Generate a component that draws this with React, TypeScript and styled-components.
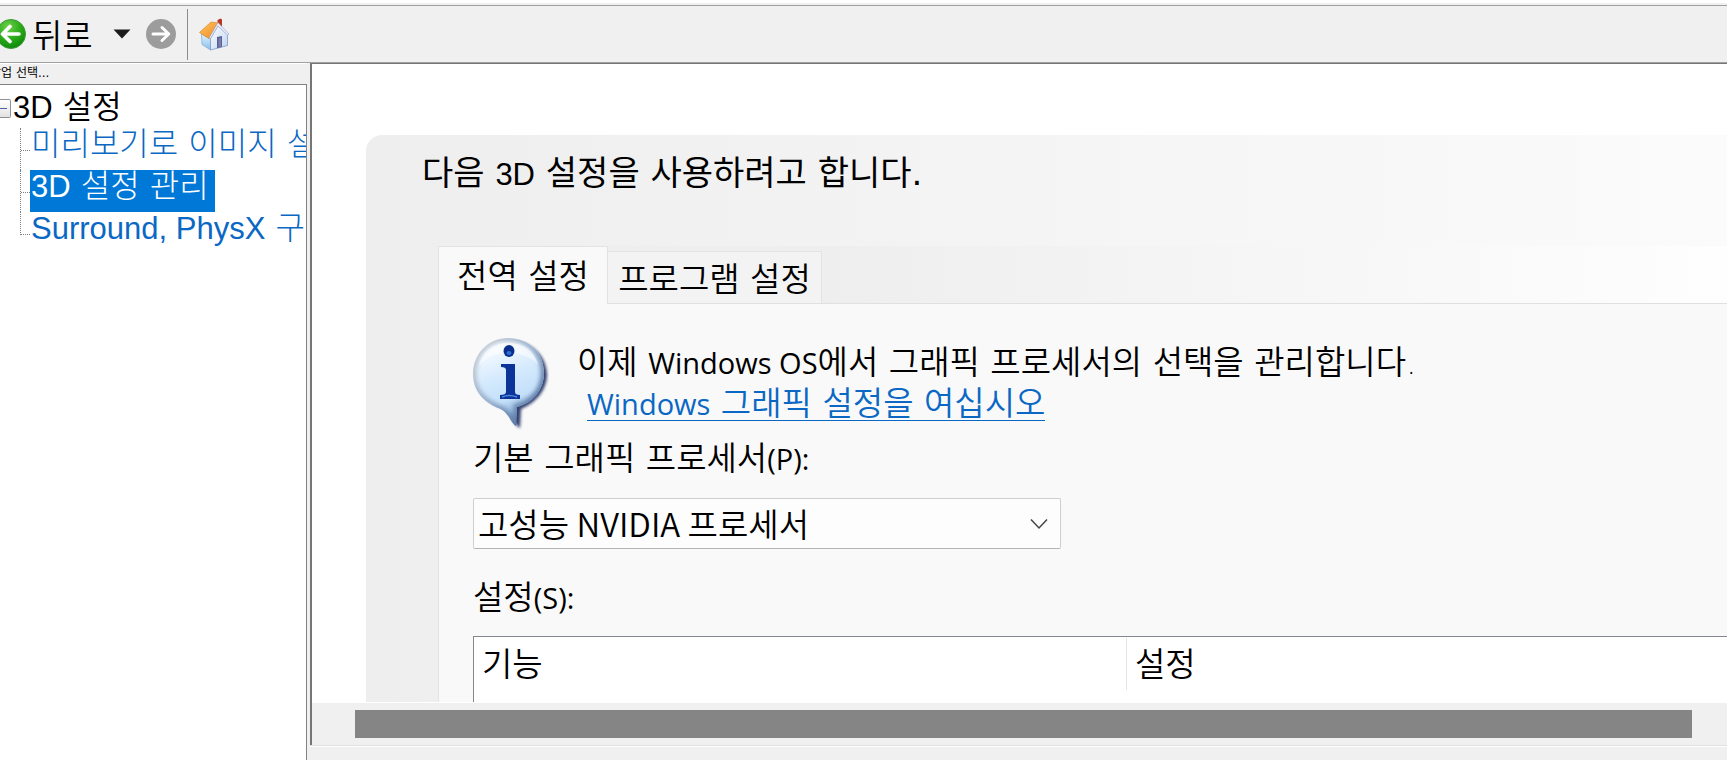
import React from "react";
import styled, { createGlobalStyle } from "styled-components";

const Global = createGlobalStyle`
  *, *::before, *::after { box-sizing: border-box; }
  body {
    margin: 0;
    background: #f0f0f0;
    color: #000;
    font-family: "DejaVu Sans", "Noto Sans CJK KR", sans-serif;
    font-size: 33px;
    font-weight: 350;
    line-height: 41px;
  }
  button, select { font: inherit; color: inherit; }
`;

const Page = styled.div`
  height: 100vh;
  display: flex;
  flex-direction: column;
  overflow: hidden;
`;

const Toolbar = styled.header`
  flex: none;
  display: flex;
  align-items: center;
  height: 63px;
  padding-top: 3px;
  border-top: 3px solid #fff;
  border-bottom: 1px solid #a0a0a0;
  background: linear-gradient(#a0a0a0, #a0a0a0) 0 2px / 100% 1px no-repeat #f0f0f0;
`;

const ToolButton = styled.button<{ $gap?: number }>`
  display: flex;
  align-items: center;
  margin: 0 0 0 ${(p) => p.$gap ?? 0}px;
  padding: 0;
  border: 0;
  background: none;
  white-space: nowrap;
  svg { display: block; }
`;

const BackLabel = styled.span`
  margin-left: 5px;
  padding-top: 4px;
`;

const ToolSeparator = styled.span`
  width: 1px;
  height: 51px;
  margin: 0 11px;
  background: #8c8c8c;
`;

const Workspace = styled.div`
  flex: 1;
  min-height: 0;
  display: flex;
`;

const Sidebar = styled.aside`
  flex: none;
  width: 307px;
  display: flex;
  flex-direction: column;
  border-top: 1px solid #fff;
`;

const SidebarTitle = styled.h2`
  margin: 0 0 0 -10px;
  height: 20px;
  font-size: 12px;
  font-weight: 400;
  line-height: 18px;
  white-space: nowrap;
`;

const Tree = styled.nav`
  flex: 1;
  overflow: hidden;
  padding-top: 1px;
  border: 1px solid #828282;
  border-width: 1px 1px 0 0;
  background: #fff;
  font-size: 32px;
`;

const TreeRoot = styled.div`
  display: flex;
  align-items: center;
  height: 42px;
  white-space: nowrap;
`;

const Toggle = styled.button`
  width: 11px;
  height: 19px;
  margin: 3px 2px 0 0;
  padding: 0;
  border: 1px solid #919191;
  border-left: 0;
  border-radius: 0 2px 2px 0;
  background: linear-gradient(#4b63a7, #4b63a7) 0 8px / 7px 1px no-repeat,
    linear-gradient(#fff, #e2e2e2);
`;

const TreeList = styled.ul`
  margin: 0;
  padding: 0 0 0 20px;
  list-style: none;
`;

const TreeItem = styled.li`
  display: flex;
  height: 42px;
  border-left: 1px dotted #808080;
  &::before {
    content: "";
    flex: none;
    width: 9px;
    height: 23px;
    border-bottom: 1px dotted #808080;
  }
  &:last-child { border-left: 0; }
  &:last-child::before { width: 10px; border-left: 1px dotted #808080; }
`;

const TreeLink = styled.a<{ $selected?: boolean }>`
  padding: 0 6px 10px 1px;
  line-height: 32px;
  white-space: nowrap;
  text-decoration: none;
  font-weight: 300;
  color: ${(p) => (p.$selected ? "#fff" : "#0a68c4")};
  background: ${(p) => (p.$selected ? "#0078d7" : "none")};
`;

const Narrow = styled.span`
  font-family: "Liberation Sans", sans-serif;
  font-size: 31px;
  line-height: 1;
`;

const Latin = styled.span`
  font-family: "Open Sans", sans-serif;
  font-size: 29px;
  font-weight: 400;
  line-height: 1;
`;

const Content = styled.main`
  flex: 1;
  min-width: 0;
  display: flex;
  flex-direction: column;
  padding-left: 3px;
`;

const Pane = styled.div`
  flex: 1;
  min-height: 0;
  display: flex;
  flex-direction: column;
  border: 2px solid #767676;
  border-width: 1px 0 0 2px;
  background: #fff;
`;

const Viewport = styled.div`
  flex: 1;
  min-height: 0;
  display: flex;
  overflow: hidden;
  padding: 71px 0 0 54px;
  border-bottom: 1px solid #fff;
`;

const Card = styled.section`
  flex: 1;
  min-width: 0;
  display: flex;
  flex-direction: column;
  padding: 18px 0 0 72px;
  border-top-left-radius: 16px;
  background: linear-gradient(90deg, #eeeeee, #fbfbfb);
`;

const CardTitle = styled.h1`
  height: 41px;
  margin: 0 0 52px -16px;
  font-size: 34px;
  font-weight: 400;
  line-height: 41px;
  white-space: nowrap;
`;

const TabStrip = styled.div`
  display: flex;
  align-items: flex-end;
  background: linear-gradient(90deg, #eeeeee 30%, #fefefe);
`;

const Tab = styled.button<{ $active?: boolean }>`
  width: ${(p) => (p.$active ? 170 : 214)}px;
  height: ${(p) => (p.$active ? 58 : 53)}px;
  padding: ${(p) => (p.$active ? 2 : 4)}px 0 0;
  border: 1px solid #e3e3e3;
  border-bottom: ${(p) => (p.$active ? "0" : "1px solid #e0e0e0")};
  border-left-width: ${(p) => (p.$active ? 1 : 0)}px;
  background: ${(p) => (p.$active ? "#f9f9f9" : "#f3f3f3")};
  white-space: nowrap;
`;

const TabRule = styled.div`
  flex: 1;
  align-self: flex-end;
  border-bottom: 1px solid #e0e0e0;
`;

const TabPanel = styled.div`
  flex: 1;
  display: flex;
  flex-direction: column;
  padding: 34px 0 0 34px;
  border-left: 1px solid #e3e3e3;
  background: #f9f9f9;
`;

const Notice = styled.div`
  display: flex;
  gap: 28px;
  height: 100px;
  svg { flex: none; display: block; }
`;

const NoticeText = styled.p`
  margin: 4px 0 0;
  white-space: nowrap;
`;

const NoticeLink = styled.a`
  display: block;
  width: fit-content;
  margin-left: 10px;
  height: 38px;
  border-bottom: 1px solid #0a68c4;
  color: #0a68c4;
  text-decoration: none;
`;

const FieldLabel = styled.label`
  display: block;
  height: 41px;
  margin-bottom: 19px;
`;

const SelectBox = styled.div`
  position: relative;
  width: 588px;
  height: 51px;
  margin-bottom: 28px;
  svg {
    position: absolute;
    right: 12px;
    top: 20px;
    pointer-events: none;
  }
`;

const Select = styled.select`
  appearance: none;
  width: 100%;
  height: 100%;
  padding: 0 40px 0 4px;
  border: 1px solid #cfcfcf;
  border-bottom-color: #b4b4b4;
  border-radius: 2px;
  background: #fdfdfd;
  font-family: "Noto Sans CJK KR", sans-serif;
`;

const SettingsLabel = styled.h2`
  height: 41px;
  margin: 0 0 18px;
  font-size: 33px;
  font-weight: 350;
  line-height: 41px;
`;

const GridFrame = styled.div`
  flex: 1;
  padding-top: 1px;
  border: 1px solid #828790;
  border-width: 1px 0 0 1px;
  background: #fff;
`;

const Grid = styled.table`
  width: 100%;
  table-layout: fixed;
  border-collapse: separate;
  border-spacing: 0;
`;

const HeadCell = styled.th<{ $width?: number }>`
  width: ${(p) => (p.$width ? `${p.$width}px` : "auto")};
  height: 52px;
  padding: 0 8px;
  border-right: 1px solid #e5e5e5;
  font-weight: 350;
  text-align: left;
  &:last-child { border-right: 0; }
`;

const ScrollTrack = styled.div`
  flex: none;
  display: flex;
  height: 42px;
  padding: 7px 35px 7px 43px;
  background: #f0f0f0;
`;

const ScrollThumb = styled.div`
  flex: 1;
  background: #858585;
`;

const StatusStrip = styled.footer`
  flex: none;
  height: 15px;
  border-top: 1px solid #e0e0e0;
  box-shadow: inset 0 1px #fff;
`;

const BackIcon = () => (
  <svg width="27" height="32" viewBox="0 0 27 32" aria-hidden="true">
    <defs>
      <radialGradient id="green" cx="0.4" cy="0.25" r="0.8">
        <stop offset="0" stopColor="#6fd04a" />
        <stop offset="0.5" stopColor="#2fae1c" />
        <stop offset="1" stopColor="#0a8606" />
      </radialGradient>
    </defs>
    <circle cx="11" cy="16" r="14.5" fill="url(#green)" stroke="#3f9a38" />
    <path d="M19 16H3M10 8.500L2.500 16l7.500 7.500" fill="none" stroke="#fff" strokeWidth="3.600" strokeLinecap="round" strokeLinejoin="round" />
  </svg>
);

const CaretIcon = () => (
  <svg width="18" height="10" viewBox="0 0 18 10" aria-hidden="true">
    <path d="M0.500 0.500h17L9 9.500z" fill="#1c1c1e" />
  </svg>
);

const ForwardIcon = () => (
  <svg width="30" height="30" viewBox="0 0 30 30" aria-hidden="true">
    <circle cx="15" cy="15" r="15" fill="#9c9c9c" />
    <path d="M7 15h15.500M16 8.500l6.800 6.500-6.800 6.500" fill="none" stroke="#fff" strokeWidth="3" strokeLinecap="round" strokeLinejoin="round" />
  </svg>
);

const HomeIcon = () => (
  <svg width="31" height="33" viewBox="0 0 31 33" aria-hidden="true">
    <defs>
      <linearGradient id="roof" x1="0" y1="0" x2="1" y2="1">
        <stop offset="0" stopColor="#ffc468" />
        <stop offset="1" stopColor="#ee8a1c" />
      </linearGradient>
      <linearGradient id="side" x1="0" y1="0" x2="0" y2="1">
        <stop offset="0" stopColor="#e3f2fc" />
        <stop offset="1" stopColor="#84bfe8" />
      </linearGradient>
      <linearGradient id="front" x1="0" y1="0" x2="1" y2="1">
        <stop offset="0" stopColor="#ffffff" />
        <stop offset="1" stopColor="#bcd4f0" />
      </linearGradient>
    </defs>
    <path d="M18.500 2l3-1.500 1.500 1v8l-4.500-4z" fill="#b93620" />
    <path d="M2.500 16l9 5v11L3 26.500z" fill="url(#side)" stroke="#7ea9d4" strokeWidth="0.700" />
    <path d="M11.500 20.500L19 7.500l9.500 9v11l-17 4.500z" fill="url(#front)" stroke="#7f9bce" strokeWidth="0.800" />
    <path d="M18 19l5-1v11l-5 1.300z" fill="#5a6299" />
    <path d="M19.500 20.500l2.500-.5v8.500l-2.500.700z" fill="#7e7fa8" />
    <path d="M0.500 14.500L12 4l7.500 1-9.500 15.500z" fill="url(#roof)" stroke="#dc8a2a" strokeWidth="0.700" />
    <path d="M19 4.500l11 11.500-1.500 1L19 8l-7.500 12.500-1.500-.5z" fill="#e9edf7" stroke="#8496c4" strokeWidth="0.500" />
  </svg>
);

const InfoIcon = () => (
  <svg width="76" height="94" viewBox="0 0 76 94" aria-hidden="true">
    <defs>
      <linearGradient id="bubble" x1="0.300" y1="0" x2="0.600" y2="1">
        <stop offset="0" stopColor="#ffffff" />
        <stop offset="0.450" stopColor="#d3e9fd" />
        <stop offset="0.700" stopColor="#c4e0fa" />
        <stop offset="1" stopColor="#5a88b8" />
      </linearGradient>
      <linearGradient id="rim" x1="0" y1="0" x2="1" y2="1">
        <stop offset="0" stopColor="#d3d6da" />
        <stop offset="0.500" stopColor="#8fa9c8" />
        <stop offset="1" stopColor="#3c5c90" />
      </linearGradient>
      <filter id="shade" x="-20%" y="-20%" width="140%" height="140%">
        <feGaussianBlur stdDeviation="1.500" />
      </filter>
      <filter id="soft" x="-20%" y="-20%" width="140%" height="140%">
        <feGaussianBlur stdDeviation="2" />
      </filter>
      <clipPath id="inside">
        <path d="M35 0C15 0 0 16 0 36c0 17 11 28 25 34 6 2 8 5 11 9 3 5 5 8 7 9l1-19C60 65 71 52 71 35 71 15 56 0 35 0z" />
      </clipPath>
    </defs>
    <path d="M37 3C17 3 3 18 3 36c0 17 11 29 26 33 5 2 8 7 11 13 2 4 5 7 7 8l1-19C62 65 74 53 74 36 73 17 58 3 37 3z" fill="#1a2c60" opacity="0.900" filter="url(#shade)" />
    <path d="M35 0C15 0 0 16 0 36c0 17 11 28 25 34 6 2 8 5 11 9 3 5 5 8 7 9l1-19C60 65 71 52 71 35 71 15 56 0 35 0z" fill="url(#bubble)" />
    <path d="M35 0C15 0 0 16 0 36c0 17 11 28 25 34 6 2 8 5 11 9 3 5 5 8 7 9l1-19C60 65 71 52 71 35 71 15 56 0 35 0z" fill="none" stroke="url(#rim)" strokeWidth="7" filter="url(#soft)" clipPath="url(#inside)" />
    <path d="M35 5C18 5 8 16 6 28c8-10 18-13 29-13s23 3 30 12C62 14 52 5 35 5z" fill="#fff" opacity="0.500" />
    <ellipse cx="36" cy="13" rx="5.500" ry="6" fill="#0a2e8e" />
    <ellipse cx="36" cy="15" rx="2.500" ry="2" fill="#2f6fd0" />
    <path d="M28 26h14v28q0 3 5 3v4H27v-4q6 0 6-3V32q0-3-5-3z" fill="#0c3397" />
    <path d="M29 59q7-3 15 0" fill="none" stroke="#4a86da" strokeWidth="1.500" />
  </svg>
);

const ChevronIcon = () => (
  <svg width="20" height="12" viewBox="0 0 20 12" aria-hidden="true">
    <path d="M2 1.500l8 8.500 8-8.500" fill="none" stroke="#444" strokeWidth="1.500" />
  </svg>
);

export default function App() {
  return (
    <>
      <Global />
      <Page>
        <Toolbar>
          <ToolButton>
            <BackIcon />
            <BackLabel>뒤로</BackLabel>
          </ToolButton>
          <ToolButton $gap={20} aria-label="최근 페이지">
            <CaretIcon />
          </ToolButton>
          <ToolButton $gap={15} aria-label="앞으로">
            <ForwardIcon />
          </ToolButton>
          <ToolSeparator />
          <ToolButton aria-label="홈">
            <HomeIcon />
          </ToolButton>
        </Toolbar>
        <Workspace>
          <Sidebar>
            <SidebarTitle>작업 선택...</SidebarTitle>
            <Tree>
              <TreeRoot>
                <Toggle aria-label="접기" />
                <span><Narrow>3D</Narrow> 설정</span>
              </TreeRoot>
              <TreeList>
                <TreeItem>
                  <TreeLink href="#preview">미리보기로 이미지 설정 조정</TreeLink>
                </TreeItem>
                <TreeItem>
                  <TreeLink href="#manage" $selected><Narrow>3D</Narrow> 설정 관리</TreeLink>
                </TreeItem>
                <TreeItem>
                  <TreeLink href="#physx"><Narrow>Surround, PhysX</Narrow> 구성</TreeLink>
                </TreeItem>
              </TreeList>
            </Tree>
          </Sidebar>
          <Content>
            <Pane>
              <Viewport>
                <Card>
                  <CardTitle>다음 <Narrow>3D</Narrow> 설정을 사용하려고 합니다.</CardTitle>
                  <TabStrip>
                    <Tab $active>전역 설정</Tab>
                    <Tab>프로그램 설정</Tab>
                    <TabRule />
                  </TabStrip>
                  <TabPanel>
                    <Notice>
                      <InfoIcon />
                      <NoticeText>
                        이제 <Latin>Windows OS</Latin>에서 그래픽 프로세서의 선택을 관리합니다.
                        <NoticeLink href="#graphics">
                          <Latin>Windows</Latin> 그래픽 설정을 여십시오
                        </NoticeLink>
                      </NoticeText>
                    </Notice>
                    <FieldLabel htmlFor="gpu">기본 그래픽 프로세서<Latin>(P):</Latin></FieldLabel>
                    <SelectBox>
                      <Select id="gpu">
                        <option>고성능 NVIDIA 프로세서</option>
                      </Select>
                      <ChevronIcon />
                    </SelectBox>
                    <SettingsLabel>설정<Latin>(S):</Latin></SettingsLabel>
                    <GridFrame>
                      <Grid>
                        <thead>
                          <tr>
                            <HeadCell $width={653}>기능</HeadCell>
                            <HeadCell>설정</HeadCell>
                          </tr>
                        </thead>
                      </Grid>
                    </GridFrame>
                  </TabPanel>
                </Card>
              </Viewport>
              <ScrollTrack>
                <ScrollThumb />
              </ScrollTrack>
            </Pane>
            <StatusStrip />
          </Content>
        </Workspace>
      </Page>
    </>
  );
}
